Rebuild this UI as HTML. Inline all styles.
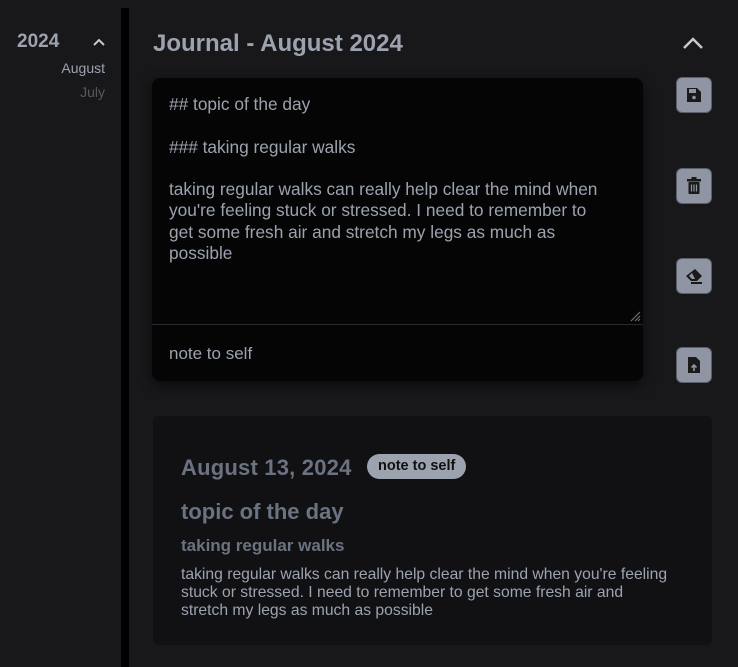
<!DOCTYPE html>
<html><head><style>
*{margin:0;padding:0;box-sizing:border-box}
body{width:738px;height:667px;background:#18181b;font-family:"Liberation Sans",sans-serif;position:relative;overflow:hidden;color:#9ca3af}
.a{position:absolute}
.bar{left:121px;top:8px;width:8px;height:659px;background:#000}
.btn{position:absolute;left:676px;width:36px;height:36px;background:#8f95a3;border-radius:6px;border:1px solid #5b606b;display:flex;align-items:center;justify-content:center}
</style></head><body>
<div class="a" style="left:17px;top:31px;font-size:19px;font-weight:bold;color:#9ca3af">2024</div>
<svg class="a" style="left:92px;top:37px" width="14" height="10"><path d="M2 8 L7 3 L12 8" stroke="#c4c8d0" stroke-width="2" fill="none"/></svg>
<div class="a" style="right:633px;top:60px;font-size:14px;color:#9ca3af">August</div>
<div class="a" style="right:633px;top:84px;font-size:14px;color:#55585f">July</div>
<div class="a bar"></div>
<div class="a" style="left:153px;top:30px;font-size:24px;font-weight:bold;color:#9ca3af">Journal - August 2024</div>
<svg class="a" style="left:682px;top:36px" width="22" height="14"><path d="M2 12 L11 3 L20 12" stroke="#c4c8d0" stroke-width="2.5" fill="none"/></svg>
<div class="a" style="left:152px;top:78px;width:491px;height:303px;background:#050505;border-radius:8px;box-shadow:0 4px 12px rgba(0,0,0,.6)"></div>
<div class="a" style="left:152px;top:324px;width:491px;height:1px;background:#2a2a2e"></div>
<div class="a" style="left:169px;top:94px;width:440px;font-size:17.3px;line-height:21.3px;color:#9ca3af">## topic of the day<br><br>### taking regular walks<br><br>taking regular walks can really help clear the mind when you're feeling stuck or stressed. I need to remember to get some fresh air and stretch my legs as much as possible</div>
<svg class="a" style="left:629px;top:310px" width="12" height="12"><path d="M11 2 L2 11 M11 6 L6 11 M11 9 L9 11" stroke="#777" stroke-width="1"/></svg>
<div class="a" style="left:169px;top:344px;font-size:17px;color:#9ca3af">note to self</div>
<div class="btn" style="top:77px"><svg width="16" height="16"><path d="M1 1h10l4 4v10H1z" fill="#1a1a1a"/><rect x="3" y="2" width="7" height="4" fill="#8f95a3"/><circle cx="8" cy="10.5" r="1.8" fill="#8f95a3"/></svg></div>
<div class="btn" style="top:168px"><svg width="16" height="18"><rect x="1" y="2" width="14" height="2.5" fill="#1a1a1a"/><rect x="5.5" y="0" width="5" height="2" fill="#1a1a1a"/><rect x="2.5" y="5" width="11" height="12" rx="1" fill="#1a1a1a"/><path d="M5.5 7.5v7M8 7.5v7M10.5 7.5v7" stroke="#8f95a3" stroke-width="1.2"/></svg></div>
<div class="btn" style="top:258px"><svg width="20" height="16"><path d="M11 1 L18 8 L13 13 H7 L2 8 Z" fill="#1a1a1a"/><path d="M5 8 L8 11 H11 L8 5 Z" fill="#8f95a3"/><path d="M7 15 H18" stroke="#1a1a1a" stroke-width="2"/></svg></div>
<div class="btn" style="top:347px"><svg width="14" height="18"><path d="M1 1h8l4 4v12H1z" fill="#1a1a1a"/><path d="M7 15V9M4.5 11.5L7 9l2.5 2.5" stroke="#8f95a3" stroke-width="1.6" fill="none"/></svg></div>
<div class="a" style="left:153px;top:416px;width:559px;height:229px;background:#111114;border-radius:6px"></div>
<div class="a" style="left:181px;top:455px;font-size:22px;font-weight:bold;color:#6b7280;letter-spacing:.2px">August 13, 2024</div>
<div class="a" style="left:367px;top:454px;height:25px;padding:0 11px;border-radius:13px;background:#9ca3af;color:#111;font-size:14.5px;font-weight:bold;line-height:25px">note to self</div>
<div class="a" style="left:181px;top:499px;font-size:22px;font-weight:bold;color:#6b7280">topic of the day</div>
<div class="a" style="left:181px;top:536px;font-size:17px;font-weight:bold;color:#6b7280">taking regular walks</div>
<div class="a" style="left:181px;top:566px;width:490px;font-size:15.7px;line-height:18px;color:#9ca3af">taking regular walks can really help clear the mind when you're feeling stuck or stressed. I need to remember to get some fresh air and stretch my legs as much as possible</div>
</body></html>
